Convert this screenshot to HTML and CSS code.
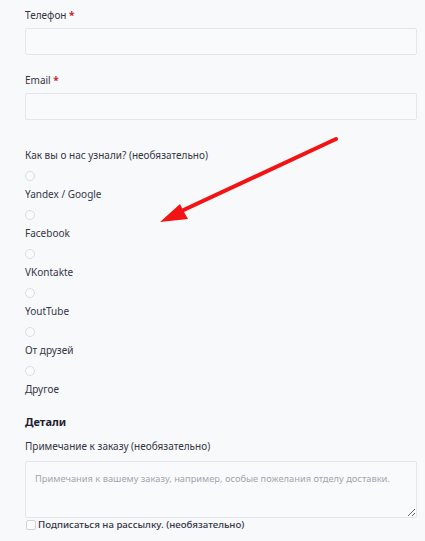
FILE: index.html
```html
<!DOCTYPE html>
<html lang="ru">
<head>
  <meta charset="UTF-8">
  <meta name="viewport" content="width=device-width, initial-scale=1.0">
  <title>Оформление заказа</title>
  <link rel="stylesheet" href="styles.css">
</head>
<body>
  <form class="checkout">
    <div class="field">
      <label for="phone">Телефон <abbr class="required">*</abbr></label>
      <input type="tel" id="phone" class="text-input">
    </div>
    <div class="field">
      <label for="email">Email <abbr class="required">*</abbr></label>
      <input type="email" id="email" class="text-input">
    </div>

    <div class="field source">
      <label>Как вы о нас узнали? (необязательно)</label>
      <div class="option"><input type="radio" name="source" id="s1"><label for="s1">Yandex / Google</label></div>
      <div class="option"><input type="radio" name="source" id="s2"><label for="s2">Facebook</label></div>
      <div class="option"><input type="radio" name="source" id="s3"><label for="s3">VKontakte</label></div>
      <div class="option"><input type="radio" name="source" id="s4"><label for="s4">YoutTube</label></div>
      <div class="option"><input type="radio" name="source" id="s5"><label for="s5">От друзей</label></div>
      <div class="option"><input type="radio" name="source" id="s6"><label for="s6">Другое</label></div>
    </div>

    <h3 class="section-title">Детали</h3>
    <div class="field">
      <label for="notes">Примечание к заказу (необязательно)</label>
      <textarea id="notes" class="text-input notes" placeholder="Примечания к вашему заказу, например, особые пожелания отделу доставки."></textarea>
    </div>
    <label class="subscribe"><input type="checkbox">Подписаться на рассылку. (необязательно)</label>
  </form>

  <!-- annotation arrow drawn over the form -->
  <svg class="arrow" width="425" height="541" viewBox="0 0 425 541">
    <line x1="336" y1="139" x2="175" y2="214" stroke="#f21414" stroke-width="4" stroke-linecap="round"/>
    <polygon points="160,222 180,204 184,212 188,219" fill="#f21414"/>
  </svg>
</body>
</html>
```

FILE: styles.css
```css
body {
  margin: 0;
  background-color: #f8f9fb;
  font-family: "Noto Sans", "Open Sans", sans-serif;
  font-size: 10px;
  color: #343644;
}
.checkout {
  padding: 5px 8px 0 25px;
}
.field label {
  display: block;
  line-height: 20px;
}
.required {
  color: #d0202a;
  text-decoration: none;
  font-weight: bold;
}
.text-input {
  display: block;
  box-sizing: border-box;
  width: 100%;
  height: 27px;
  margin: 3px 0 15px;
  background: #f9fafc;
  border: 1px solid #e5e6ea;
  border-radius: 2px;
  font-family: inherit;
  font-size: 10px;
}
.field:nth-child(2) .text-input {
  margin-bottom: 25px;
}
.option input {
  appearance: none;
  display: block;
  width: 10px;
  height: 10px;
  margin: 6px 0 3px;
  border: 1px solid #dcdde1;
  border-radius: 50%;
  background: #fafbfc;
}
.section-title {
  margin: 13px 0 4px;
  font-size: 11px;
  line-height: 20px;
  color: #1e2030;
}
.notes {
  height: 57px;
  margin: 5px 0 0;
  padding: 10px 9px;
  resize: vertical;
  font-size: 9.3px;
  color: #343644;
}
.notes::placeholder {
  color: #a3a5ae;
}
.subscribe {
  display: flex;
  align-items: center;
  gap: 2px;
  line-height: 14px;
  font-size: 9.7px;
  font-weight: 500;
}
.subscribe input {
  appearance: none;
  width: 10px;
  height: 10px;
  margin: 0 0 0 1px;
  border: 1px solid #d3d4d9;
  border-radius: 2px;
  background: #fff;
}
.arrow {
  position: absolute;
  top: 0;
  left: 0;
  pointer-events: none;
}
```
